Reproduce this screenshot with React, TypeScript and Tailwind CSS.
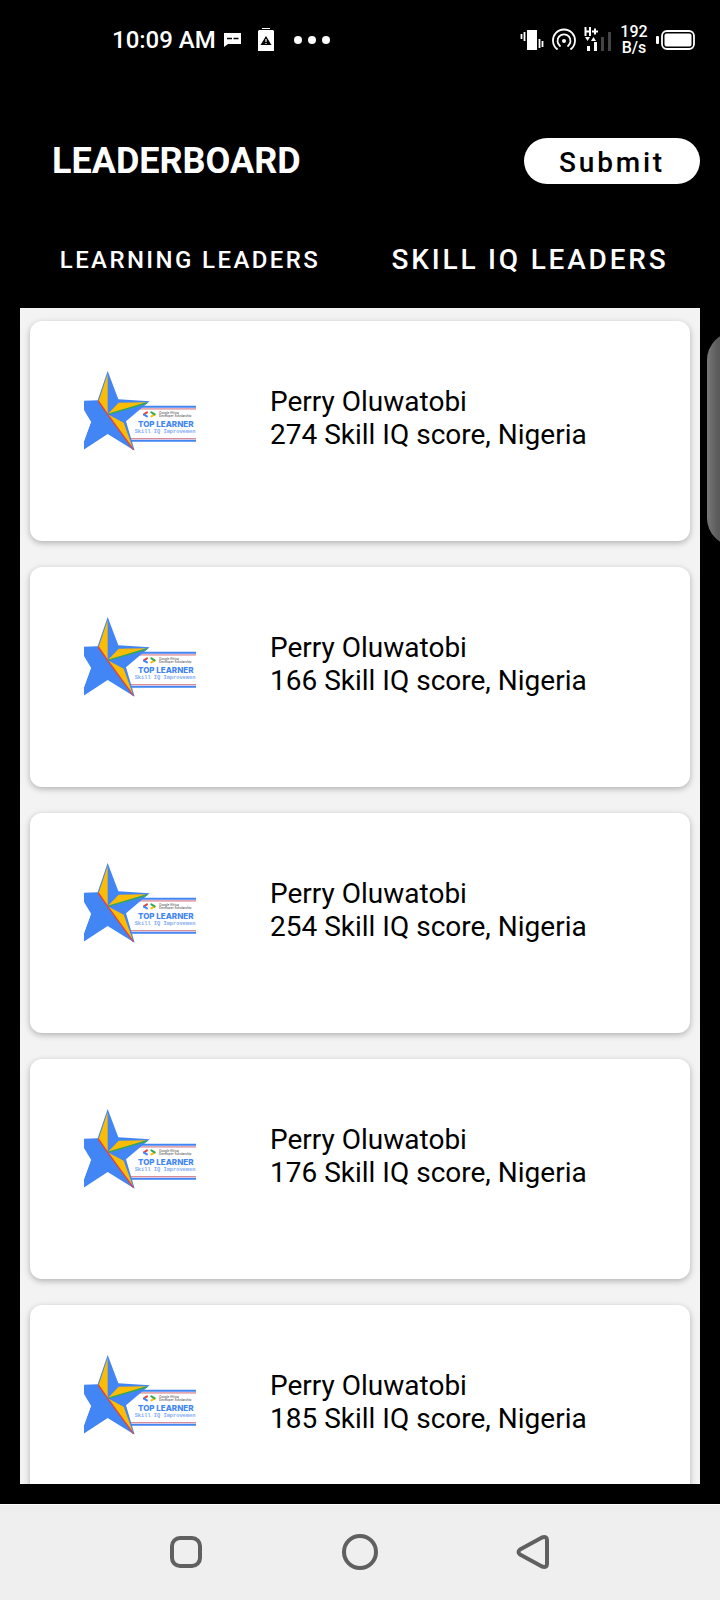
const leaders = [
  { name: "Perry Oluwatobi", score: 274, country: "Nigeria" },
  { name: "Perry Oluwatobi", score: 166, country: "Nigeria" },
  { name: "Perry Oluwatobi", score: 254, country: "Nigeria" },
  { name: "Perry Oluwatobi", score: 176, country: "Nigeria" },
  { name: "Perry Oluwatobi", score: 185, country: "Nigeria" },
];

function StatusBar() {
  return (
    <div className="flex h-20 shrink-0 items-center justify-between pr-6 pl-28 text-white">
      <div className="flex items-center">
        <span className="text-2xl font-medium">10:09 AM</span>
        <svg className="ml-2 h-4 w-[18px]" viewBox="0 0 18 16" fill="none" aria-hidden="true">
          <path d="M0 1h17v11H4l-4 3z" fill="white" />
          <path d="M3 6.500h5M9.500 6.500h5" stroke="black" strokeWidth="1.500" />
        </svg>
        <svg className="ml-4 h-6 w-4" viewBox="0 0 16 24" aria-hidden="true">
          <path d="M4 0h8v1H4zM1 2h14l1 1v20H0V3z" fill="white" />
          <path d="M8 8l5.500 9h-11z" fill="black" />
          <path d="M8 11v3M8 15v1" stroke="white" strokeWidth="1.2" />
        </svg>
        <svg className="ml-5 h-2 w-9" viewBox="0 0 36 8" fill="white" aria-hidden="true">
          <circle cx="4" cy="4" r="4" />
          <circle cx="18" cy="4" r="4" />
          <circle cx="32" cy="4" r="4" />
        </svg>
      </div>
      <div className="flex items-center">
        <svg className="h-6 w-6" viewBox="0 0 24 24" aria-hidden="true">
          <path d="M7 2h10v20H7z" fill="white" />
          <path d="M1.500 6v5M4.500 4v9M19.500 11v9M22.500 13v6" stroke="white" strokeWidth="1.8" />
        </svg>
        <svg className="ml-2 h-6 w-6" viewBox="0 0 24 24" fill="none" stroke="white" strokeWidth="1.8" strokeLinecap="round" aria-hidden="true">
          <path d="M5 21A11 11 0 1 1 19 21" />
          <path d="M8 18A6.5 6.5 0 1 1 16 18" />
          <circle cx="12" cy="13" r="2" fill="white" stroke="none" />
        </svg>
        <svg className="ml-2 h-7 w-7" viewBox="0 0 28 28" aria-hidden="true">
          <path d="M1.500 1v9M6 1v9M1.500 5.500h4.500M8 5.500h6M11 2.500v6" stroke="white" strokeWidth="2" fill="none" />
          <path d="M1 11h5l-2.500 4zM7 15h5l-2.500-4z" fill="white" />
          <path d="M3 20h3v5H3zM10 16h3v9h-3z" fill="white" />
          <path d="M17 11h3v14h-3zM24 6h3v19h-3z" fill="#444444" />
        </svg>
        <span className="ml-2 w-7 text-center text-base/4 font-medium">
          192
          <br />
          B/s
        </span>
        <svg className="ml-2 h-5 w-10" viewBox="0 0 40 20" aria-hidden="true">
          <rect x="0" y="6" width="3" height="8" rx="1" fill="white" />
          <rect x="6" y="1" width="32" height="18" rx="5" fill="none" stroke="white" strokeWidth="1.800" />
          <rect x="8.500" y="3.500" width="27" height="13" rx="2" fill="white" />
        </svg>
      </div>
    </div>
  );
}

function Badge() {
  return (
    <svg className="h-20 w-28 shrink-0" viewBox="24 27 336 240" role="img" aria-label="Top learner badge">
      <path d="M150 134H360M150 236H360" stroke="#4285f4" strokeWidth="6" />
      <path d="M150 141H360M150 230H360" stroke="#dc8b96" strokeWidth="4" />
      <path d="M128 143H360V227H165z" fill="white" />
      <path
        d="M95 27L127 112L221 118L150 178L176 266L95 216L12 270L45 179L-6 117L65 115z"
        fill="#4285f4"
      />
      <path d="M24 144L45 179L24 238z" fill="white" />
      <path d="M95 36V157L68 117z" fill="#fbbc04" />
      <path d="M95 157L128 122L212 121z" fill="#fbbc04" />
      <path d="M95 157L143 182L171 259z" fill="#fbbc04" />
      <path d="M95 157L213 123" stroke="#34a853" strokeWidth="4" />
      <path d="M67 117L95 157L172 263" stroke="#e5433d" strokeWidth="4" fill="none" />
      <g fill="none" strokeWidth="6" strokeLinecap="round">
        <path d="M213 151L204 157" stroke="#ea4335" />
        <path d="M204 158L213 163" stroke="#4285f4" />
        <path d="M226 163L236 158" stroke="#fbbc04" />
        <path d="M226 151L236 157" stroke="#34a853" />
      </g>
      <g fontFamily="Inter, sans-serif">
        <text x="249" y="155" fontSize="9" fontWeight="500" fill="#555555">Google Africa</text>
        <text x="249" y="166" fontSize="9" fontWeight="500" fill="#555555">Developer Scholarship</text>
        <text x="186" y="195" fontSize="24" fontWeight="800" fill="#4285f4">TOP LEARNER</text>
      </g>
      <text x="176" y="214" fontSize="16" fontWeight="700" fontFamily="Liberation Mono, monospace" fill="#82abf3">
        Skill IQ Improvemen
      </text>
    </svg>
  );
}

export default function App() {
  return (
    <div className="relative flex h-screen flex-col overflow-hidden bg-black font-['Roboto',sans-serif]">
      <StatusBar />
      <header className="flex items-center justify-between pt-[58px] pr-5 pl-13">
        <h1 className="text-4xl font-bold text-white">LEADERBOARD</h1>
        <button className="h-[46px] w-44 rounded-full bg-white pt-1 text-[28px]/[42px] font-medium tracking-widest text-black">
          Submit
        </button>
      </header>
      <nav className="mt-11 flex px-5 pb-4 font-medium text-white" role="tablist" aria-label="Leaderboards">
        <button role="tab" aria-selected="false" className="h-16 flex-1 text-2xl tracking-widest">
          LEARNING LEADERS
        </button>
        <button role="tab" aria-selected="true" className="h-16 flex-1 text-[28px] tracking-widest">
          SKILL IQ LEADERS
        </button>
      </nav>
      <main className="mx-5 mb-5 min-h-0 flex-1 overflow-y-auto bg-[#f3f3f3] [scrollbar-width:none]">
        <ul className="flex flex-col gap-[26px] px-[10px] py-[13px]">
          {leaders.map((leader) => (
            <li
              key={leader.score}
              className="flex h-[220px] shrink-0 items-start rounded-xl bg-white pl-[54px] shadow-[0_2px_6px_rgba(0,0,0,0.28)]"
            >
              <div className="pt-[50px]">
                <Badge />
              </div>
              <div className="pt-16 pl-[74px] text-[28px]/[33px] text-black">
                <p>{leader.name}</p>
                <p>
                  {leader.score} Skill IQ score, {leader.country}
                </p>
              </div>
            </li>
          ))}
        </ul>
      </main>
      <footer className="flex h-24 shrink-0 items-center justify-center gap-[138px] border-t border-white bg-[#efefef] pb-[2px]">
        <button aria-label="Recent apps">
          <svg className="h-9 w-9" viewBox="0 0 36 36" fill="none" stroke="#606060" strokeWidth="4">
            <rect x="4" y="4" width="28" height="28" rx="8" />
          </svg>
        </button>
        <button aria-label="Home">
          <svg className="h-9 w-9" viewBox="0 0 36 36" fill="none" stroke="#606060" strokeWidth="4">
            <circle cx="18" cy="18" r="16" />
          </svg>
        </button>
        <button aria-label="Back">
          <svg className="h-9 w-9" viewBox="0 0 36 36" fill="none" stroke="#606060" strokeWidth="4" strokeLinejoin="round">
            <path d="M4 15.500L26 3.500Q31 2 31 6V30Q31 34 26 32.500L4 20.500Q1 18 4 15.500z" />
          </svg>
        </button>
      </footer>
      <div className="absolute top-[332px] -right-[43px] h-[214px] w-14 rounded-[28px] bg-linear-to-r from-[#777777] via-[#5a5a5a] via-20% to-[#5a5a5a]" />
    </div>
  );
}
